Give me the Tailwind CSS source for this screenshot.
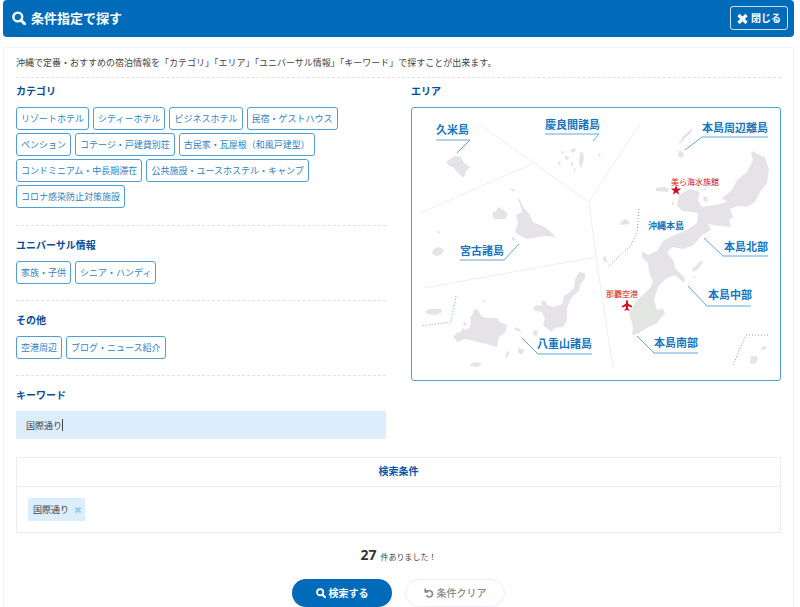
<!DOCTYPE html>
<html lang="ja">
<head>
  <meta charset="UTF-8" />
  <meta name="viewport" content="width=device-width, initial-scale=1" />
  <title>条件指定で探す</title>
  <script src="https://cdn.jsdelivr.net/npm/@tailwindcss/browser@4"></script>
</head>
<body class="bg-white pl-[3px] pr-[6px] font-['Noto_Sans','Noto_Sans_CJK_JP',sans-serif] text-[9px] leading-4 text-[#444]">

  <!-- Title bar -->
  <header class="flex items-center justify-between rounded-sm bg-[#006cb9] pt-[6px] pb-[7px] pl-[9px] pr-[6px] text-white">
    <h1 class="flex items-center gap-[5px] text-[13px] font-bold">
      <svg class="size-[14px]" viewBox="0 0 14 14" fill="none" stroke="currentColor">
        <circle cx="5.8" cy="6" r="4.4" stroke-width="2.4" />
        <path d="M9 9.2l3.6 3.6" stroke-width="3" stroke-linecap="round" />
      </svg>
      条件指定で探す
    </h1>
    <button type="button" class="flex h-6 items-center gap-[3px] rounded-[3px] border border-white/80 px-[6px] text-[10px] font-bold">
      <svg class="size-[11px]" viewBox="0 0 11 11" stroke="currentColor" stroke-width="3.2">
        <path d="M1.5 2l8 8M9.5 2l-8 8" />
      </svg>
      閉じる
    </button>
  </header>

  <main class="mt-[10px] border-x border-t border-[#f6f3f8] px-3">
    <p class="border-b border-dashed border-[#e2e0e6] pt-[7px] pb-[6px]">沖縄で定番・おすすめの宿泊情報を「カテゴリ」「エリア」「ユニバーサル情報」「キーワード」で探すことが出来ます。</p>

    <div class="grid grid-cols-2 gap-[25px] pt-[5px]">
      <!-- Conditions -->
      <div>
        <section class="border-b border-dashed border-[#e2e0e6] pb-[17px]">
          <h2 class="mb-2 text-[10px] font-bold text-[#0a4c96]">カテゴリ</h2>
          <div class="flex flex-wrap gap-x-1 gap-y-[3px] text-[#2f82c3]">
            <button type="button" class="h-[23px] rounded-[3px] border border-[#4f9fd6] px-1">リゾートホテル</button>
            <button type="button" class="h-[23px] rounded-[3px] border border-[#4f9fd6] px-1">シティーホテル</button>
            <button type="button" class="h-[23px] rounded-[3px] border border-[#4f9fd6] px-1">ビジネスホテル</button>
            <button type="button" class="h-[23px] rounded-[3px] border border-[#4f9fd6] px-1">民宿・ゲストハウス</button>
            <button type="button" class="h-[23px] rounded-[3px] border border-[#4f9fd6] px-1">ペンション</button>
            <button type="button" class="h-[23px] rounded-[3px] border border-[#4f9fd6] px-1">コテージ・戸建貸別荘</button>
            <button type="button" class="h-[23px] rounded-[3px] border border-[#4f9fd6] px-1">古民家・瓦屋根（和風戸建型）</button>
            <button type="button" class="h-[23px] rounded-[3px] border border-[#4f9fd6] px-1">コンドミニアム・中長期滞在</button>
            <button type="button" class="h-[23px] rounded-[3px] border border-[#4f9fd6] px-1">公共施設・ユースホステル・キャンプ</button>
            <button type="button" class="h-[23px] rounded-[3px] border border-[#4f9fd6] px-1">コロナ感染防止対策施設</button>
          </div>
        </section>

        <section class="border-b border-dashed border-[#e2e0e6] pt-[11px] pb-[16px]">
          <h2 class="mb-2 text-[10px] font-bold text-[#0a4c96]">ユニバーサル情報</h2>
          <div class="flex flex-wrap gap-x-1 gap-y-[3px] text-[#2f82c3]">
            <button type="button" class="h-[23px] rounded-[3px] border border-[#4f9fd6] px-1">家族・子供</button>
            <button type="button" class="h-[23px] rounded-[3px] border border-[#4f9fd6] px-1">シニア・ハンディ</button>
          </div>
        </section>

        <section class="border-b border-dashed border-[#e2e0e6] pt-[11px] pb-[16px]">
          <h2 class="mb-2 text-[10px] font-bold text-[#0a4c96]">その他</h2>
          <div class="flex flex-wrap gap-x-1 gap-y-[3px] text-[#2f82c3]">
            <button type="button" class="h-[23px] rounded-[3px] border border-[#4f9fd6] px-1">空港周辺</button>
            <button type="button" class="h-[23px] rounded-[3px] border border-[#4f9fd6] px-1">ブログ・ニュース紹介</button>
          </div>
        </section>

        <section class="pt-[11px]">
          <label for="keyword" class="mb-2 block text-[10px] font-bold text-[#0a4c96]">キーワード</label>
          <div class="relative">
            <input id="keyword" type="text" value="国際通り" class="block h-7 w-full bg-[#dceefc] px-[10px] outline-none" />
            <span class="absolute top-2 left-[46px] h-3 w-px bg-[#444]"></span>
          </div>
        </section>
      </div>

      <!-- Area map -->
      <section>
        <h2 class="mb-2 text-[10px] font-bold text-[#0a4c96]">エリア</h2>
        <div class="rounded-[3px] border border-[#4f9fd6]">
          <svg class="block h-auto w-full" viewBox="0 0 368 272">
            <defs>
              <linearGradient id="land" x1="0" y1="0" x2="0" y2="1">
                <stop offset=".7" stop-color="#e5e3e7" />
                <stop offset=".85" stop-color="#e2e5e1" />
              </linearGradient>
            </defs>

            <!-- borders between areas -->
            <path d="M68 17L177 94L228 15M8 105L120 56M177 94L184 149L201 260M12 180L184 149" fill="none" stroke="#f0edf2" />

            <!-- islands -->
            <g fill="#e5e3e7">
              <!-- Kume -->
              <path d="M34 54l4-3 5-3 6 1 3 6 6 4-4 4-2 7-7-6-4-5-4-1z" />
              <!-- Kerama -->
              <path d="M168 44l3 1 1 6-3 9-2-5zM158 42l5-2 1 3-4 2zM153 48l4 1-1 3-3-1zM147 53l2 1-2 4-1-1zM150 43l2 0-1 3-2 0zM159 54l2 0 0 4-2-1zM162 60l2 1-1 2-1 0zM187 45l2 1-3 4z" />
              <!-- Miyako -->
              <path d="M99 80l4 2 0 2-4-2zM105 89L108 92L111 99L118 107L121 114L133 119L144 129L134 128L126 129L115 131L107 127L103 124L106 115L104 107L110 104L108 96z" />
              <path d="M80 105l4-2 2-4 6 3 4 4-3 5-5 0-6 0zM100 129l4 1-2 3-2-1zM24 122l4 2-1 2z" />
              <path d="M21 142l4-3 5 1 2 3-3 4-5 1-4-3z" />
              <!-- Yaeyama -->
              <path d="M13 204l4-3 12 0 1 3-6 3-9-1z" />
              <path d="M41 229L46 224L48 225L51 220L54 222L58 219L59 214L58 209L61 206L62 201L66 202L70 209L78 210L85 210L88 214L95 217L94 222L93 225L87 229L86 232L85 239L78 237L70 235L58 232L52 231L46 234z" />
              <path d="M52 214l3 1-2 3-2-1zM71 192l3 1-2 2zM103 219l5 2 1 3-6-2zM122 222l4 1-1 5-4-1zM106 240l7 2-4 5-3-3zM95 243l3 2-4 5-1-1zM58 256l6-2 6 1-4 4-7-1z" />
              <path d="M121 199L126 197L130 198L129 192L134 194L135 197L142 199L150 196L152 188L158 184L162 180L163 171L167 164L173 165L173 170L168 177L167 183L162 187L158 192L155 200L155 212L151 219L143 220L139 224L131 217L133 211L130 204L123 203z" />
              <!-- outer islands of the main island -->
              <path d="M267 36l4-8 4-3 6-6-2 6-6 5-5 6zM267 43l4 1 1 4-4 2-2-3zM244 80l8-1 5 2-1 3-12-1zM260 93l2 2-1 3-1-1zM208 114l5-3 4 2 0 3-8 1zM191 149l3-1 0 4 2 2-4 0zM291 88l4 1 1 5-4-1zM292 80l2 1-1 2-2-1z" />
              <path d="M280 161l4-3 2-3 5-3-1 4-4 5-5 3zM281 169l3-1-2 3zM349 239l5-1 0 3-4 1zM339 248l5 0 2 3-3 5-5-1z" />
            </g>
            <!-- main island -->
            <path d="M341 43L345 46L353 49L357 62L355 75L348 84L343 94L335 99L326 98L318 101L321 109L317 112L319 119L308 118L296 116L299 122L290 127L286 132L280 138L271 141L261 139L255 144L262 154L263 160L273 170L272 175L263 167L255 170L246 179L242 192L245 202L251 201L253 205L245 215L235 220L225 226L220 227L221 219L217 204L225 192L238 180L241 174L237 164L236 155L230 149L230 143L236 147L245 143L251 133L258 129L275 122L285 115L286 105L279 104L270 103L265 97L267 87L278 81L288 84L286 92L290 99L303 97L315 94L310 90L320 82L325 72L335 64L341 52L339 46z" fill="url(#land)" />

            <!-- inset frames -->
            <path d="M44 188L39 214L9 218" fill="none" stroke="#69abd8" stroke-dasharray="1 2" />
            <path d="M227 101L225 125L219 137L196 159M356 227H334L321 257" fill="none" stroke="#7d9aad" stroke-dasharray="1 2" />

            <!-- leader lines -->
            <path d="M24 32H58L45 45M133 26H187L181 33M48 152H92L107 136M110 230L126 246H180M356 29H290L273 42M356 148H311L292 130M339 198H295L276 178M286 245H242L225 228" fill="none" stroke="#62a8d9" />

            <g class="text-[11px] font-bold" fill="#1576bd">
              <a href="#kume"><text x="24" y="26">久米島</text></a>
              <a href="#kerama"><text x="133" y="21">慶良間諸島</text></a>
              <a href="#ritou"><text x="290" y="24">本島周辺離島</text></a>
              <a href="#miyako"><text x="48" y="147">宮古諸島</text></a>
              <a href="#hokubu"><text x="312" y="143">本島北部</text></a>
              <a href="#chubu"><text x="296" y="191">本島中部</text></a>
              <a href="#nanbu"><text x="242" y="239">本島南部</text></a>
              <a href="#yaeyama"><text x="125" y="240">八重山諸島</text></a>
            </g>
            <text x="236" y="121" class="text-[9px] font-bold" fill="#1576bd">沖縄本島</text>

            <g fill="#cf1020">
              <text x="259" y="77" class="text-[8px]">美ら海水族館</text>
              <path d="M264 77l1.300 3.600h3.900l-3.100 2.400 1.100 3.800-3.200-2.200-3.200 2.200 1.100-3.800-3.100-2.400h3.900z" />
              <text x="194" y="189" class="text-[8px]">那覇空港</text>
              <path d="M215 192q1 0 1 2v1.500l4 2.500v1.400l-4-1.200v2.300l1.500 1.200v1l-2.500-.7-2.500.7v-1l1.500-1.200v-2.300l-4 1.200v-1.400l4-2.500v-1.500q0-2 1-2z" />
            </g>
          </svg>
        </div>
      </section>
    </div>

    <!-- Selected conditions -->
    <section class="mt-[18px] border border-[#eeebf1]">
      <h2 class="border-b border-[#eeebf1] pt-[5px] pb-[7px] text-center text-[10px] font-bold text-[#0a55a5]">検索条件</h2>
      <div class="flex flex-wrap gap-1 px-[11px] py-[11px]">
        <span class="flex h-[23px] items-center gap-[6px] bg-[#dceefc] pr-1 pl-[5px]">
          国際通り
          <button type="button" aria-label="国際通りを削除" class="text-[#93cdec]">
            <svg class="size-[6px]" viewBox="0 0 6 6" stroke="currentColor" stroke-width="2">
              <path d="M.5 .5l5 5M5.500 .5l-5 5" />
            </svg>
          </button>
        </span>
      </div>
    </section>

    <p class="mt-3 flex items-baseline justify-center gap-1 text-[8px] leading-5">
      <strong class="text-[14px] text-[#333]">27</strong>件ありました！
    </p>

    <div class="mt-3 flex justify-center gap-[13px] text-[10px]">
      <button type="submit" class="flex h-7 w-[100px] items-center justify-center gap-[3px] rounded-full bg-[#006cb9] font-bold text-white">
        <svg class="size-[10px]" viewBox="0 0 14 14" fill="none" stroke="currentColor">
          <circle cx="5.800" cy="6" r="4.400" stroke-width="2.400" />
          <path d="M9 9.200l3.600 3.600" stroke-width="3" stroke-linecap="round" />
        </svg>
        検索する
      </button>
      <button type="reset" class="flex h-7 w-[100px] items-center justify-center gap-[3px] rounded-full border border-[#f0eef2] bg-white font-medium text-[#888]">
        <svg class="size-[10px]" viewBox="0 0 10 10" fill="none" stroke="currentColor" stroke-width="1.600">
          <path d="M1.500 2.800H5.500a3.100 3.100 0 1 1-3 4.200M1.200 .6v3.400h3" />
        </svg>
        条件クリア
      </button>
    </div>
  </main>

</body>
</html>
